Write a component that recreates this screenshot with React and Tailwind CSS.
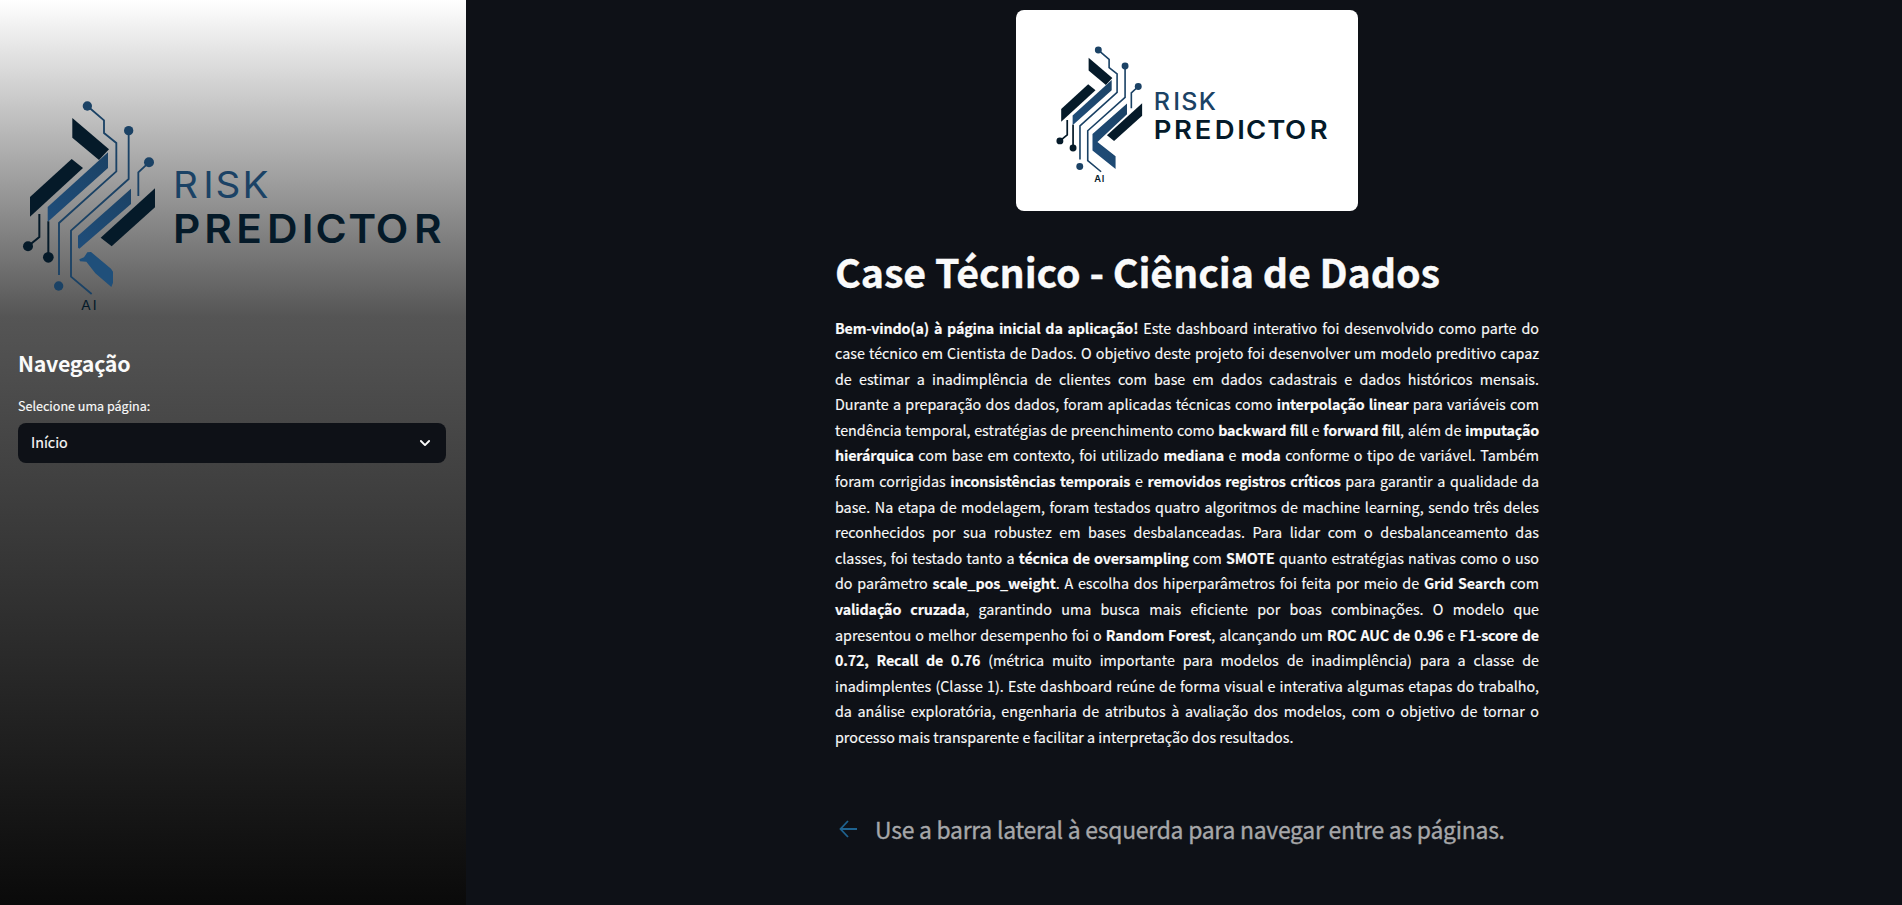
import React from "react";

const NAVY = "#051a29";

function Logo({ full, className, viewBox }) {
  const id = full ? "f" : "s";
  return (
    <svg className={className} viewBox={viewBox} fill="none" role="img" aria-label="Risk Predictor AI">
      <defs>
        <linearGradient id={"b" + id} x1="0" y1="1" x2="1" y2="0">
          <stop offset="0" stopColor="#1f4d7a" />
          <stop offset="1" stopColor="#1b4265" />
        </linearGradient>
      </defs>
      <g transform="translate(0 80) scale(0.33333)">
        <path fill={NAVY} d="M217 114 327 208 297 240 217 173Z" />
        <path fill={NAVY} d="M215 237 249 264 90 410V351Z" />
        <path fill={NAVY} d="M465 325V382L335 499 302 473Z" />
        <path fill={`url(#b${id})`} d="M324 217V264L143 426V381Z" />
        {full ? (
          <path fill={`url(#b${id})`} d="M395 326V376L258 504 342 570V629L235 543V467Z" />
        ) : (
          <>
            <path fill={`url(#b${id})`} d="M393 326V372L238 506 234 503V467Z" />
            <path fill="#1f4f7a" d="M238 538 252 532 262 517 273 516 333 566 339 575V608L334 621 286 580 259 545 240 544Z" />
          </>
        )}
        <g stroke="#1b4265" strokeWidth={full ? 7.5 : 5.5}>
          <path d="M262 78 312 121V159L349 189V274L177 429V585" />
          <path d="M386 152V297L213 452V590L275 642" />
          <path d="M447 247 415 277V348" />
        </g>
        <g stroke={NAVY} strokeWidth={full ? 8 : 6}>
          <path d="M118 402V471L84 499" />
          <path d="M145 424V532" />
        </g>
        <g fill="#1b4265">
          <circle cx="262" cy="78" r={full ? 16 : 14} />
          <circle cx="386" cy="152" r={full ? 16 : 14} />
          <circle cx="447" cy="247" r={full ? 16 : 15} />
          <circle cx="176" cy="618" r={full ? 16 : 14} />
        </g>
        <circle cx="84" cy="499" r={full ? 16 : 15} fill={NAVY} />
        <circle cx="145" cy="532" r="16" fill={NAVY} />
      </g>
      <g fontFamily="Inter, sans-serif" transform="scale(1.06 1)">
        <text x="163.3 191.7 203.3 228.7" y="198" fontSize="36.5" fontWeight={full ? 500 : 400} fill="#1b4265">RISK</text>
        <text x="163.3 192.6 222.8 252 284.8 297.7 328.5 354.4 390.6" y="242.7" fontSize="40" fontWeight="600" fill={NAVY}>PREDICTOR</text>
        <text x="76.4 87.4" y="309.8" fontSize="13.5" fontWeight={full ? 600 : 400} fill={NAVY}>AI</text>
      </g>
    </svg>
  );
}

const B = ({ children }) => <strong className="font-bold tracking-[-0.17px]">{children}</strong>;

const LINES = [
  <><B>Bem-vindo(a) à página inicial da aplicação!</B> Este dashboard interativo foi desenvolvido como parte do</>,
  <>case técnico em Cientista de Dados. O objetivo deste projeto foi desenvolver um modelo preditivo capaz</>,
  <>de estimar a inadimplência de clientes com base em dados cadastrais e dados históricos mensais.</>,
  <>Durante a preparação dos dados, foram aplicadas técnicas como <B>interpolação linear</B> para variáveis com</>,
  <>tendência temporal, estratégias de preenchimento como <B>backward fill</B> e <B>forward fill</B>, além de <B>imputação</B></>,
  <><B>hierárquica</B> com base em contexto, foi utilizado <B>mediana</B> e <B>moda</B> conforme o tipo de variável. Também</>,
  <>foram corrigidas <B>inconsistências temporais</B> e <B>removidos registros críticos</B> para garantir a qualidade da</>,
  <>base. Na etapa de modelagem, foram testados quatro algoritmos de machine learning, sendo três deles</>,
  <>reconhecidos por sua robustez em bases desbalanceadas. Para lidar com o desbalanceamento das</>,
  <>classes, foi testado tanto a <B>técnica de oversampling</B> com <B>SMOTE</B> quanto estratégias nativas como o uso</>,
  <>do parâmetro <B>scale_pos_weight</B>. A escolha dos hiperparâmetros foi feita por meio de <B>Grid Search</B> com</>,
  <><B>validação cruzada</B>, garantindo uma busca mais eficiente por boas combinações. O modelo que</>,
  <>apresentou o melhor desempenho foi o <B>Random Forest</B>, alcançando um <B>ROC AUC de 0.96</B> e <B>F1-score de</B></>,
  <><B>0.72, Recall de 0.76</B> (métrica muito importante para modelos de inadimplência) para a classe de</>,
  <>inadimplentes (Classe 1). Este dashboard reúne de forma visual e interativa algumas etapas do trabalho,</>,
  <>da análise exploratória, engenharia de atributos à avaliação dos modelos, com o objetivo de tornar o</>,
];

export default function App() {
  return (
    <div className="flex h-[905px] w-full overflow-hidden bg-[#0e1117] font-['Noto_Sans_CJK_JP','Noto_Sans',sans-serif] text-[#fafafa]">
      <aside className="flex w-[466px] shrink-0 flex-col bg-[linear-gradient(180deg,#ffffff_0%,#555555_35%,#0a0a0a_100%)]">
        <Logo className="h-[330px] w-[466px] shrink-0" viewBox="0 0 466 330" />
        <div className="flex flex-col px-[18px] pt-[15px]">
          <h2 className="text-[21.4px] leading-9 font-bold tracking-[-0.3px]">Navegação</h2>
          <label className="mt-[15px] text-[12.55px] leading-5 [-webkit-text-stroke:0.15px]">Selecione uma página:</label>
          <div className="mt-[7px] flex h-10 w-[428px] items-center justify-between rounded-lg bg-[#0e1117] pr-[15px] pl-[13px]">
            <span className="pb-[2px] text-[14.3px] leading-6 [-webkit-text-stroke:0.15px]">Início</span>
            <svg className="h-3 w-3" viewBox="0 0 12 12" fill="none" stroke="#fafafa" strokeWidth="1.9" strokeLinecap="round" strokeLinejoin="round">
              <path d="M1.9 4 6 8.1 10.1 4" />
            </svg>
          </div>
        </div>
      </aside>
      <main className="flex flex-1 flex-col items-center pt-[10px] pl-[6px]">
        <div className="flex w-[704px] flex-col">
          <div className="flex h-[201px] w-[342px] justify-center self-center overflow-hidden rounded-lg bg-white">
            <Logo full className="h-[201px] w-[342px]" viewBox="-39.8 44.2 528.2 310.4" />
          </div>
          <h1 className="mt-[33px] text-[39.4px] leading-[53px] font-bold tracking-[-0.11px] whitespace-nowrap [-webkit-text-stroke:0.3px]">Case Técnico - Ciência de Dados</h1>
          <p className="mt-[17.5px] text-[14.32px] leading-[25.6px] [-webkit-text-stroke:0.15px]">
            {LINES.map((line, i) => (
              <span key={i} className="block text-justify whitespace-nowrap [text-align-last:justify]">{line} </span>
            ))}
            <span className="block whitespace-nowrap">processo mais transparente e facilitar a interpretação dos resultados.</span>
          </p>
          <div className="mt-[59.5px] flex items-center">
            <svg className="ml-[4px] h-[18px] w-[18px]" viewBox="0 0 18 18" fill="none" stroke="#1f6390" strokeWidth="1.8">
              <path d="M18 9H2M9 1 1.5 9 9 17" />
            </svg>
            <span className="ml-[18px] text-[22.9px] leading-10 tracking-[-0.24px] whitespace-nowrap text-[#a6a7a9] [-webkit-text-stroke:0.35px]">Use a barra lateral à esquerda para navegar entre as páginas.</span>
          </div>
        </div>
      </main>
    </div>
  );
}
